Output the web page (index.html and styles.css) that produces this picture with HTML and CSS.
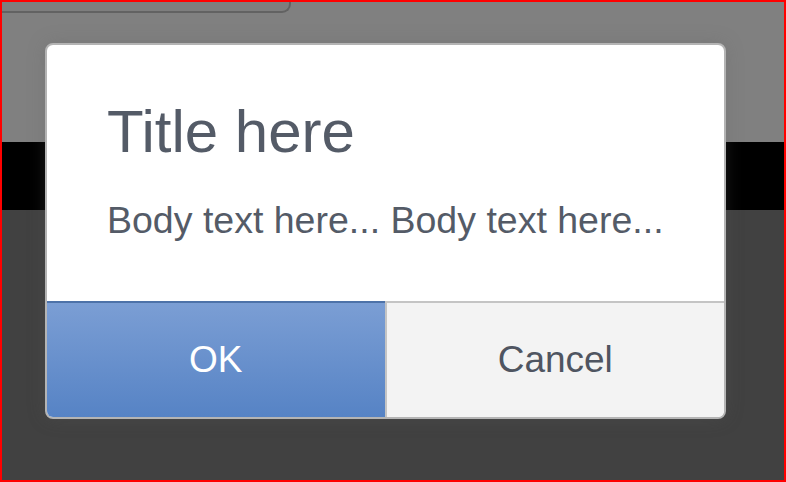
FILE: index.html
```html
<!DOCTYPE html>
<html lang="en">
<head>
    <meta charset="UTF-8">
    <meta name="viewport" content="width=device-width, initial-scale=1.0">
    <title>Dialog</title>
    <link rel="stylesheet" href="styles.css">
</head>
<body>
    <div class="top">
        <div class="tab"></div>
    </div>
    <div class="band"></div>
    <div class="bottom"></div>

    <div class="dialog">
        <div class="content">
            <h1 class="title">Title here</h1>
            <p class="text">Body text here... Body text here...</p>
        </div>
        <div class="actions">
            <button class="btn btn-ok">OK</button>
            <button class="btn btn-cancel">Cancel</button>
        </div>
    </div>
</body>
</html>
```

FILE: styles.css
```css
        html {
            margin: 0;
            padding: 0;
        }
        body {
            margin: 0;
            width: 786px;
            height: 482px;
            box-sizing: border-box;
            border: 2px solid #ff0000;
            display: flex;
            flex-direction: column;
            position: relative;
            overflow: hidden;
            font-family: "Liberation Sans", Arial, sans-serif;
        }
        .top {
            height: 140px;
            background-color: #808080;
        }
        .tab {
            width: 287px;
            height: 9px;
            border-right: 2px solid #626262;
            border-bottom: 2px solid #626262;
            border-bottom-right-radius: 9px;
            background-color: #7e7e7e;
        }
        .band {
            height: 68px;
            background-color: #000;
        }
        .bottom {
            flex: 1;
            background-color: #414141;
        }
        /* modal box, sits over the page */
        .dialog {
            position: absolute;
            left: 43px;
            top: 41px;
            width: 681px;
            height: 376px;
            box-sizing: border-box;
            border: 2px solid #b4b4b4;
            border-radius: 8px;
            background-color: #fff;
            overflow: hidden;
            display: flex;
            flex-direction: column;
            box-shadow: 0 0 18px rgba(90, 90, 90, 0.25);
        }
        .content {
            flex: 1;
            padding: 55px 60px 0;
            color: #545b67;
        }
        .title {
            margin: 0;
            font-size: 60px;
            line-height: 64px;
            font-weight: normal;
        }
        .text {
            margin: 35px 0 0;
            font-size: 37.5px;
            line-height: 42px;
        }
        .actions {
            display: flex;
            height: 116px;
        }
        .btn {
            flex: 1;
            margin: 0;
            padding: 0;
            border: none;
            font-family: inherit;
            font-size: 37px;
        }
        .btn-ok {
            color: #fff;
            border-top: 2px solid #4d72a8;
            background: linear-gradient(#7b9ed4, #5683c5);
        }
        .btn-cancel {
            color: #4f5561;
            background-color: #f3f3f3;
            border-top: 2px solid #c4c4c4;
            border-left: 2px solid #c4c4c4;
        }
```
